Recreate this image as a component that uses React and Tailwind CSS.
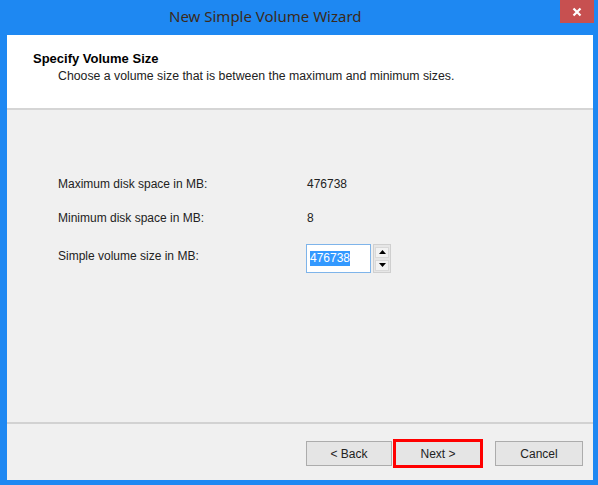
import React from "react";

export default function App() {
  return (
    <div className="w-[598px] h-[485px] bg-[#1e88f2] flex flex-col overflow-hidden" style={{ fontFamily: '"Liberation Sans", Arial, sans-serif' }}>
      {/* Title bar */}
      <div className="h-[35px] shrink-0 flex items-start relative">
        <div className="pl-[169px] pt-[6px] text-[15px] leading-[20px] text-[#3b2a1a]" style={{ fontFamily: '"Noto Sans", "Open Sans", sans-serif' }}>
          New Simple Volume Wizard
        </div>
        <div className="absolute right-[4px] top-0 w-[34px] h-[23px] bg-[#c75050] flex items-center justify-center">
          <svg width="10" height="10" viewBox="0 0 10 10">
            <path d="M1.5 1.5 L8.5 8.5 M8.5 1.5 L1.5 8.5" stroke="#ffffff" strokeWidth="2.2" />
          </svg>
        </div>
      </div>
      {/* Client area */}
      <div className="ml-[7px] mr-[5px] mb-[5px] flex-1 flex flex-col bg-[#f0f0f0] text-[12px] text-[#222]">
        {/* Header */}
        <div className="h-[75px] shrink-0 bg-white border-b-2 border-[#d5d5d5] pl-[26px] pt-[16px]">
          <div className="font-bold text-[13px] text-black leading-[16px]">Specify Volume Size</div>
          <div className="pl-[25px] mt-[2px] leading-[15px] text-[12.3px]">Choose a volume size that is between the maximum and minimum sizes.</div>
        </div>
        {/* Body */}
        <div className="flex-1 pl-[51px] pt-[66px]">
          <div className="flex h-[15px] items-center">
            <div className="w-[249px]">Maximum disk space in MB:</div>
            <div>476738</div>
          </div>
          <div className="flex h-[15px] items-center mt-[19px]">
            <div className="w-[249px]">Minimum disk space in MB:</div>
            <div>8</div>
          </div>
          <div className="flex mt-[19px]">
            <div className="w-[248px] pt-[3px]">Simple volume size in MB:</div>
            <div className="flex">
              <div className="w-[65px] h-[29px] bg-white border border-[#7eb4ea] flex items-center pl-[3px]">
                <span className="bg-[#3399ff] text-white leading-[15px]">476738</span>
              </div>
              <div className="ml-[2px] w-[18px] h-[29px] bg-[#e6e6e6] border border-[#cfcfcf] flex flex-col justify-center items-center gap-[2px]">
                <div className="w-[14px] h-[11px] bg-[#f2f2f2] border border-[#d9d9d9] flex items-center justify-center">
                  <svg width="7" height="4" viewBox="0 0 7 4"><path d="M0 4 L3.5 0 L7 4 Z" fill="#000" /></svg>
                </div>
                <div className="w-[14px] h-[11px] bg-[#f2f2f2] border border-[#d9d9d9] flex items-center justify-center">
                  <svg width="7" height="4" viewBox="0 0 7 4"><path d="M0 0 L3.5 4 L7 0 Z" fill="#000" /></svg>
                </div>
              </div>
            </div>
          </div>
        </div>
        {/* Footer */}
        <div className="h-[58px] shrink-0 border-t-2 border-[#d2d2d2] flex items-start pt-[17px] pl-[299px]">
          <div className="w-[86px] h-[25px] border border-[#acacac] bg-[#e5e5e5] flex items-center justify-center">&lt; Back</div>
          <div className="ml-[1px] w-[90px] h-[29px] mt-[-2px] border-[3px] border-[#ff0000] flex items-center justify-center">
            <div className="w-[84px] h-[23px] bg-[#e5e5e5] flex items-center justify-center">Next &gt;</div>
          </div>
          <div className="ml-[12px] w-[88px] h-[25px] border border-[#acacac] bg-[#e5e5e5] flex items-center justify-center">Cancel</div>
        </div>
      </div>
    </div>
  );
}
